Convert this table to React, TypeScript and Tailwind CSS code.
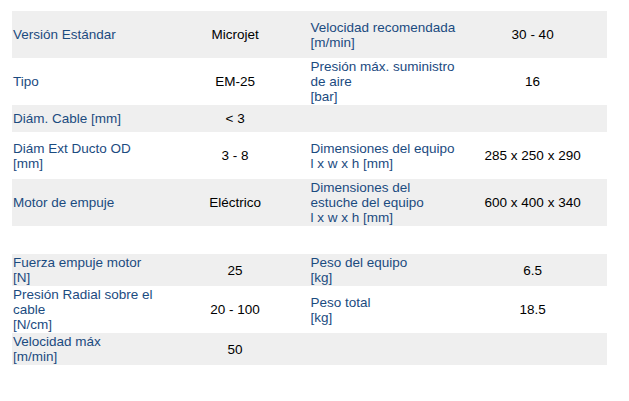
import React from "react";

type Row = { h: string; bg: boolean; cells: (React.ReactNode | null)[] };

const L = ({ children }: { children: React.ReactNode }) => (
  <div className="px-px text-[#1b4b7f]">{children}</div>
);
const V = ({ children }: { children: React.ReactNode }) => (
  <div className="text-center text-black">{children}</div>
);

const rows: Row[] = [
  {
    h: "h-[47px]",
    bg: true,
    cells: [
      <L>Versión Estándar</L>,
      <V>Microjet</V>,
      <L>
        Velocidad recomendada
        <br />
        [m/min]
      </L>,
      <V>30 - 40</V>,
    ],
  },
  {
    h: "h-[47px]",
    bg: false,
    cells: [
      <L>Tipo</L>,
      <V>EM-25</V>,
      <L>
        Presión máx. suministro de aire
        <br />
        [bar]
      </L>,
      <V>16</V>,
    ],
  },
  {
    h: "h-[27px]",
    bg: true,
    cells: [<L>Diám. Cable [mm]</L>, <V>&lt; 3</V>, null, null],
  },
  {
    h: "h-[47px]",
    bg: false,
    cells: [
      <L>
        Diám Ext Ducto OD
        <br />
        [mm]
      </L>,
      <V>3 - 8</V>,
      <L>
        Dimensiones del equipo
        <br />l x w x h [mm]
      </L>,
      <V>285 x 250 x 290</V>,
    ],
  },
  {
    h: "h-[47px]",
    bg: true,
    cells: [
      <L>Motor de empuje</L>,
      <V>Eléctrico</V>,
      <L>
        Dimensiones del estuche del equipo
        <br />l x w x h [mm]
      </L>,
      <V>600 x 400 x 340</V>,
    ],
  },
];

const rows2: Row[] = [
  {
    h: "h-[32px]",
    bg: true,
    cells: [
      <L>
        Fuerza empuje motor
        <br />
        [N]
      </L>,
      <V>25</V>,
      <L>
        Peso del equipo
        <br />
        [kg]
      </L>,
      <V>6.5</V>,
    ],
  },
  {
    h: "h-[47px]",
    bg: false,
    cells: [
      <L>
        Presión Radial sobre el cable
        <br />
        [N/cm]
      </L>,
      <V>20 - 100</V>,
      <L>
        Peso total
        <br />
        [kg]
      </L>,
      <V>18.5</V>,
    ],
  },
  {
    h: "h-[32px]",
    bg: true,
    cells: [
      <L>
        Velocidad máx
        <br />
        [m/min]
      </L>,
      <V>50</V>,
      null,
      null,
    ],
  },
];

function Table({ data }: { data: Row[] }) {
  return (
    <div className="flex flex-col">
      {data.map((r, i) => (
        <div
          key={i}
          className={`grid grid-cols-4 items-center ${r.h} ${r.bg ? "bg-[#efefef]" : "bg-white"}`}
        >
          {r.cells.map((c, j) => (
            <div key={j}>{c}</div>
          ))}
        </div>
      ))}
    </div>
  );
}

export default function App() {
  return (
    <div
      className="w-[629px] h-[401px] bg-white pt-[11px] pl-[12px] text-[13.5px] leading-[15px]"
      style={{ fontFamily: '"Liberation Sans", Arial, sans-serif' }}
    >
      <div className="w-[595px] flex flex-col gap-[28px]">
        <Table data={rows} />
        <Table data={rows2} />
      </div>
    </div>
  );
}
